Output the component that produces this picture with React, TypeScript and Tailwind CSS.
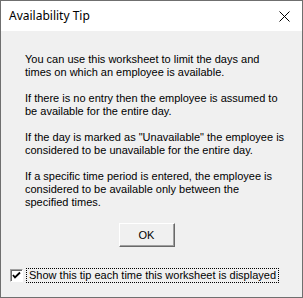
export default function App() {
  const paragraphs = [
    ["You can use this worksheet to limit the days and", "times on which an employee is available."],
    ["If there is no entry then the employee is assumed to", "be available for the entire day."],
    ['If the day is marked as "Unavailable" the employee is', "considered to be unavailable for the entire day."],
    ["If a specific time period is entered, the employee is", "considered to be available only between the", "specified times."],
  ];

  return (
    <div className="w-[303px] h-[298px] border border-[#6f6f6f] bg-[#f0f0f0] flex flex-col overflow-hidden">
      <div className="h-[30px] bg-white flex items-center justify-between pl-[8px] pr-[12px]">
        <span className="text-[12px] text-black font-['Noto_Sans',sans-serif] leading-none">
          Availability Tip
        </span>
        <svg width="11" height="11" viewBox="0 0 11 11" className="text-black">
          <path d="M0.5 0.5 L10.5 10.5 M10.5 0.5 L0.5 10.5" stroke="currentColor" strokeWidth="1" />
        </svg>
      </div>
      <div className="flex flex-col pl-[24px] pt-[22px] font-['Liberation_Sans',sans-serif] text-[11px] leading-[13px] text-black">
        {paragraphs.map((lines, i) => (
          <p key={i} className="mb-[13px]">
            {lines.map((l, j) => (
              <span key={j} className="block whitespace-nowrap">
                {l}
              </span>
            ))}
          </p>
        ))}
      </div>
      <div className="flex justify-center pr-[10px] mt-[1px]">
        <button className="w-[56px] h-[24px] bg-[#f0f0f0] border-t border-l border-t-white border-l-white border-b border-r border-b-[#696969] border-r-[#696969] shadow-[inset_-1px_-1px_0_#a0a0a0] font-['Liberation_Sans',sans-serif] text-[11px] text-black">
          OK
        </button>
      </div>
      <div className="flex items-center pl-[9px] mt-[21px]">
        <span className="w-[13px] h-[13px] bg-white border-t border-l border-t-[#a0a0a0] border-l-[#a0a0a0] border-b border-r border-b-white border-r-white shadow-[inset_1px_1px_0_#696969] flex items-center justify-center">
          <svg width="9" height="9" viewBox="0 0 9 9">
            <path d="M1 4 L3 6.5 L8 1.5" stroke="black" strokeWidth="1.8" fill="none" />
          </svg>
        </span>
        <span className="ml-[3px] px-[2px] border border-dotted border-black font-['Liberation_Sans',sans-serif] text-[11px] leading-[13px] text-black">
          Show this tip each time this worksheet is displayed
        </span>
      </div>
    </div>
  );
}
